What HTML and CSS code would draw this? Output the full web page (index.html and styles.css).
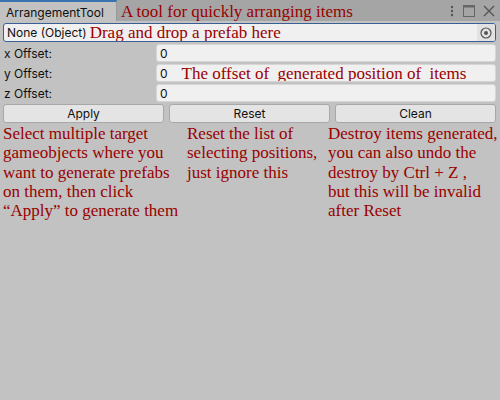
FILE: index.html
```html
<!DOCTYPE html>
<html>
<head>
<meta charset="utf-8">
<link rel="stylesheet" href="styles.css">
</head>
<body>
<div class="window">
  <div class="titlebar">
    <div class="tab">ArrangementTool</div>
    <span class="note title-note">A tool for quickly arranging items</span>
    <div class="spacer"></div>
    <div class="win-icons">
      <svg width="6" height="14" viewBox="0 0 6 14"><circle cx="3" cy="3" r="1.2" fill="#555"/><circle cx="3" cy="7" r="1.2" fill="#555"/><circle cx="3" cy="11" r="1.2" fill="#555"/></svg>
      <svg width="12" height="12" viewBox="0 0 12 12"><rect x="0.5" y="0.5" width="11" height="11" fill="none" stroke="#666" stroke-width="1"/><rect x="0.5" y="0.5" width="11" height="2" fill="#666"/></svg>
      <svg width="12" height="12" viewBox="0 0 12 12"><path d="M1 1 L11 11 M11 1 L1 11" stroke="#555" stroke-width="1.4"/></svg>
    </div>
  </div>
  <div class="content">
    <div class="objfield">
      <span class="ui-text">None (Object)</span>
      <span class="note obj-note">Drag and drop a prefab here</span>
      <div class="spacer"></div>
      <div class="picker">
        <svg width="12" height="12" viewBox="0 0 12 12"><circle cx="6" cy="6" r="5" fill="none" stroke="#555" stroke-width="1.2"/><circle cx="6" cy="6" r="2" fill="#555"/></svg>
      </div>
    </div>
    <div class="row">
      <div class="label">x Offset:</div>
      <div class="field">0</div>
    </div>
    <div class="row">
      <div class="label">y Offset:</div>
      <div class="field">0<span class="note y-note">The offset of&nbsp; generated position of&nbsp; items</span></div>
    </div>
    <div class="row">
      <div class="label">z Offset:</div>
      <div class="field">0</div>
    </div>
    <div class="buttons">
      <div class="btn">Apply</div>
      <div class="btn">Reset</div>
      <div class="btn">Clean</div>
    </div>
    <div class="notes">
      <div class="note block">Select multiple target<br>gameobjects where you<br>want to generate prefabs<br>on them, then click<br>“Apply” to generate them</div>
      <div class="note block">Reset the list of<br>selecting positions,<br>just ignore this</div>
      <div class="note block">Destroy items generated,<br>you can also undo the<br>destroy by Ctrl + Z ,<br>but this will be invalid<br>after Reset</div>
    </div>
  </div>
</div>
</body>
</html>
```

FILE: styles.css
```css
html, body {
  margin: 0;
  padding: 0;
}
body {
  width: 500px;
  height: 400px;
  background: #c2c2c2;
  font-family: Inter, "Noto Sans", sans-serif;
  font-size: 12px;
  color: #101010;
  overflow: hidden;
}
.window {
  width: 500px;
  height: 400px;
  background: #c2c2c2;
}
.titlebar {
  height: 21px;
  background: #a5a5a5;
  display: flex;
  align-items: center;
}
.tab {
  height: 21px;
  box-sizing: border-box;
  padding: 3px 0 0 6px;
  width: 117px;
  background: #c2c2c2;
  border-top: 2px solid #3a72b0;
  border-right: 1px solid #999;
  font-size: 12px;
  line-height: 15px;
}
.note {
  font-family: "Liberation Serif", "DejaVu Serif", serif;
  color: #990000;
  font-size: 17px;
  white-space: nowrap;
}
.title-note {
  margin-left: 4px;
  line-height: 21px;
  padding-top: 2px;
}
.spacer {
  flex: 1;
}
.win-icons {
  display: flex;
  align-items: center;
  gap: 8px;
  padding-right: 5px;
}
.content {
  padding: 2px 4px 0 3px;
}
.objfield {
  height: 19px;
  box-sizing: border-box;
  border: 1px solid #3a5f94;
  border-radius: 3px;
  background: #f0f0f0;
  display: flex;
  align-items: center;
  padding-left: 3px;
  overflow: hidden;
}
.ui-text {
  line-height: 15px;
}
.obj-note {
  margin-left: 3px;
  line-height: 17px;
}
.picker {
  width: 18px;
  height: 17px;
  background: #e2e2e2;
  display: flex;
  align-items: center;
  justify-content: center;
}
.row {
  display: flex;
  align-items: center;
  height: 18px;
  margin-top: 2px;
}
.label {
  width: 152px;
  padding-left: 1px;
}
.field {
  flex: 1;
  height: 18px;
  box-sizing: border-box;
  background: #f0f0f0;
  border: 1px solid #d6d6d6;
  border-radius: 3px;
  padding-left: 3px;
  display: flex;
  align-items: center;
  overflow: hidden;
}
.y-note {
  margin-left: 14px;
  line-height: 17px;
}
.buttons {
  display: flex;
  gap: 5px;
  margin-top: 2px;
}
.btn {
  flex: 1;
  height: 19px;
  box-sizing: border-box;
  background: #e4e4e4;
  border: 1px solid #a8a8a8;
  border-radius: 3px;
  text-align: center;
  line-height: 17px;
}
.notes {
  display: grid;
  grid-template-columns: 184px 141px 1fr;
  margin-top: 1px;
}
.block {
  line-height: 19.3px;
}
```
